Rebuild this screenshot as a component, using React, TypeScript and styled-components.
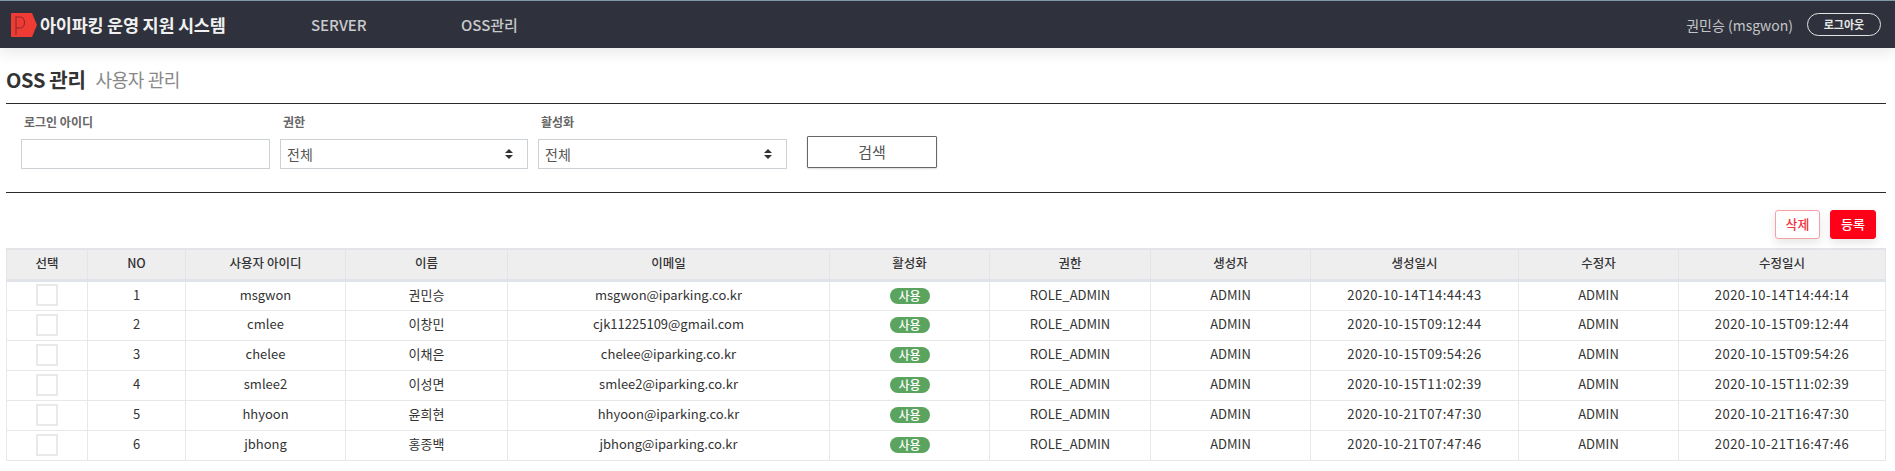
import React from "react";
import styled, { createGlobalStyle } from "styled-components";

const Global = createGlobalStyle`
  html, body { margin: 0; padding: 0; background: #fff; overflow: hidden; }
  body { font-family: "Noto Sans CJK KR", "Noto Sans", sans-serif; color: #333; }
  * { box-sizing: border-box; }
`;

const TopBar = styled.header`
  height: 48px;
  background: #2f323c;
  border-top: 1px solid #7d9aa8;
  display: flex;
  align-items: center;
  padding: 0 14px 0 11px;
  box-shadow: 0 5px 14px rgba(0, 0, 0, 0.09);
`;
const Brand = styled.div`
  display: flex;
  align-items: center;
  width: 300px;
  gap: 3px;
  font-size: 17.5px;
  font-weight: 700;
  color: #f0f0f0;
  letter-spacing: -0.25px;
  white-space: nowrap;
`;
const Nav = styled.a<{ $width: number }>`
  width: ${(p) => p.$width}px;
  font-size: 15px;
  font-weight: 500;
  color: #c9cacc;
`;
const Spacer = styled.div`
  flex: 1;
`;
const UserName = styled.span`
  font-size: 14px;
  color: #c4c5c8;
  margin-right: 14px;
`;
const Logout = styled.button`
  width: 74px;
  height: 23px;
  border: 1px solid #e4e4e4;
  border-radius: 12px;
  background: transparent;
  color: #e8e8e8;
  font-family: inherit;
  font-size: 11px;
  font-weight: 700;
  padding: 0;
  line-height: 1;
`;
const Page = styled.main`
  padding: 0 1px 0 6px;
`;
const TitleRow = styled.div`
  height: 56px;
  display: flex;
  align-items: center;
  gap: 10px;
  margin-right: 8px;
  border-bottom: 1px solid #2b2b2b;
  padding-top: 7px;
`;
const Title = styled.h1`
  margin: 0;
  font-size: 20px;
  font-weight: 700;
  color: #333;
  letter-spacing: -0.3px;
`;
const SubTitle = styled.h2`
  margin: 0;
  font-size: 18px;
  font-weight: 400;
  color: #888;
  letter-spacing: -0.4px;
`;
const Filter = styled.form`
  height: 89px;
  margin: 0 8px 0 0;
  padding: 8px 0 0 15px;
  display: flex;
  gap: 10px;
  border-bottom: 1px solid #2b2b2b;
`;
const Field = styled.div<{ $width: number }>`
  width: ${(p) => p.$width}px;
  display: flex;
  flex-direction: column;
`;
const Label = styled.label`
  height: 27px;
  padding-left: 3px;
  font-size: 12px;
  font-weight: 700;
  line-height: 20px;
  color: #666;
`;
const TextInput = styled.input`
  height: 30px;
  border: 1px solid #ccd1d6;
  background: #fff;
  outline: none;
  padding: 0 6px;
`;
const SelectWrap = styled.div`
  position: relative;
  height: 30px;
`;
const Select = styled.select`
  appearance: none;
  width: 100%;
  height: 100%;
  border: 1px solid #ccd1d6;
  border-radius: 0;
  background: #fff;
  padding: 0 6px;
  font-family: inherit;
  font-size: 14px;
  color: #555;
`;
const Caret = styled.svg`
  position: absolute;
  right: 15px;
  top: 10px;
  width: 8px;
  height: 10px;
`;
const SearchButton = styled.button`
  width: 130px;
  height: 32px;
  margin: 24px 0 0 10px;
  border: 1px solid #666;
  border-radius: 1px;
  background: #fff;
  color: #555;
  font-family: inherit;
  font-size: 15px;
  font-weight: 400;
  padding: 0 0 2px;
  box-shadow: 0 1px 2px rgba(0, 0, 0, 0.15);
`;
const Actions = styled.div`
  height: 55px;
  padding: 17px 18px 0 0;
  display: flex;
  justify-content: flex-end;
  gap: 10px;
`;
const ActionButton = styled.button<{ $solid?: boolean }>`
  height: 29px;
  width: ${(p) => (p.$solid ? 46 : 45)}px;
  border: 1px solid ${(p) => (p.$solid ? "#ff0019" : "#f8a0a8")};
  border-radius: 3px;
  background: ${(p) => (p.$solid ? "#ff0019" : "#fff")};
  color: ${(p) => (p.$solid ? "#fff" : "#f5323f")};
  font-family: inherit;
  font-size: 13px;
  font-weight: 500;
  padding: 0 0 2px;
  box-shadow: 0 4px 10px rgba(0, 0, 0, 0.1);
`;
const Table = styled.table`
  width: 1879px;
  table-layout: fixed;
  border-collapse: collapse;
  border-top: 2px solid #e2e4e8;
`;
const Head = styled.th`
  height: 31px;
  padding: 0 0 3px;
  background: #eeeeef;
  border-left: 1px solid #e2e4e8;
  border-right: 1px solid #e2e4e8;
  border-bottom: 3px solid #e0e3e7;
  font-size: 12.5px;
  font-weight: 500;
  color: #333;
`;
const Cell = styled.td<{ $date?: boolean }>`
  height: 30px;
  padding: 0 0 3px;
  border: 1px solid #e6e8ea;
  font-size: 13px;
  text-align: center;
  color: #333;
  letter-spacing: ${(p) => (p.$date ? "0.5px" : "0")};
`;
const Check = styled.input`
  appearance: none;
  display: block;
  width: 22px;
  height: 22px;
  margin: 2px auto 0;
  border: 2px solid #e9e9e9;
  background: #fff;
`;
const Badge = styled.span`
  display: inline-block;
  width: 40px;
  height: 16px;
  border-radius: 8px;
  background: #5aa460;
  color: #fff;
  font-size: 12px;
  font-weight: 500;
  line-height: 15px;
  vertical-align: middle;
`;

const widths = [81, 98, 160, 162, 322, 160, 161, 160, 208, 160, 207];
const heads = ["선택", "NO", "사용자 아이디", "이름", "이메일", "활성화", "권한", "생성자", "생성일시", "수정자", "수정일시"];
const rows = [
  ["msgwon", "권민승", "msgwon@iparking.co.kr", "2020-10-14T14:44:43", "2020-10-14T14:44:14"],
  ["cmlee", "이창민", "cjk11225109@gmail.com", "2020-10-15T09:12:44", "2020-10-15T09:12:44"],
  ["chelee", "이채은", "chelee@iparking.co.kr", "2020-10-15T09:54:26", "2020-10-15T09:54:26"],
  ["smlee2", "이성면", "smlee2@iparking.co.kr", "2020-10-15T11:02:39", "2020-10-15T11:02:39"],
  ["hhyoon", "윤희현", "hhyoon@iparking.co.kr", "2020-10-21T07:47:30", "2020-10-21T16:47:30"],
  ["jbhong", "홍종백", "jbhong@iparking.co.kr", "2020-10-21T07:47:46", "2020-10-21T16:47:46"],
];

const CaretIcon = () => (
  <Caret viewBox="0 0 8 10">
    <path d="M4 0 L8 4 H0 Z M0 6 H8 L4 10 Z" fill="#333" />
  </Caret>
);

const Choice = () => (
  <SelectWrap>
    <Select defaultValue="all">
      <option value="all">전체</option>
    </Select>
    <CaretIcon />
  </SelectWrap>
);

export default function App() {
  return (
    <>
      <Global />
      <TopBar>
        <Brand>
          <svg width="26" height="24" viewBox="0 0 26 24">
            <path d="M0 1 Q0 0 1 0 H21 L26 12 L21 24 H1 Q0 24 0 23 Z" fill="#ee3b33" />
            <path d="M5 22 V4 H9 C15 4 15 15 9 15 H5" fill="none" stroke="#8a2a2a" strokeWidth="1.1" />
          </svg>
          아이파킹 운영 지원 시스템
        </Brand>
        <Nav $width={150}>SERVER</Nav>
        <Nav $width={100}>OSS관리</Nav>
        <Spacer />
        <UserName>권민승 (msgwon)</UserName>
        <Logout>로그아웃</Logout>
      </TopBar>
      <Page>
        <TitleRow>
          <Title>OSS 관리</Title>
          <SubTitle>사용자 관리</SubTitle>
        </TitleRow>
        <Filter>
          <Field $width={249}>
            <Label>로그인 아이디</Label>
            <TextInput />
          </Field>
          <Field $width={248}>
            <Label>권한</Label>
            <Choice />
          </Field>
          <Field $width={249}>
            <Label>활성화</Label>
            <Choice />
          </Field>
          <SearchButton type="button">검색</SearchButton>
        </Filter>
        <Actions>
          <ActionButton type="button">삭제</ActionButton>
          <ActionButton type="button" $solid>등록</ActionButton>
        </Actions>
        <Table>
          <colgroup>
            {widths.map((w, i) => (
              <col key={i} width={w} />
            ))}
          </colgroup>
          <thead>
            <tr>
              {heads.map((h) => (
                <Head key={h}>{h}</Head>
              ))}
            </tr>
          </thead>
          <tbody>
            {rows.map((r, i) => (
              <tr key={r[0]}>
                <Cell>
                  <Check type="checkbox" />
                </Cell>
                <Cell>{i + 1}</Cell>
                <Cell>{r[0]}</Cell>
                <Cell>{r[1]}</Cell>
                <Cell>{r[2]}</Cell>
                <Cell>
                  <Badge>사용</Badge>
                </Cell>
                <Cell>ROLE_ADMIN</Cell>
                <Cell>ADMIN</Cell>
                <Cell $date>{r[3]}</Cell>
                <Cell>ADMIN</Cell>
                <Cell $date>{r[4]}</Cell>
              </tr>
            ))}
          </tbody>
        </Table>
      </Page>
    </>
  );
}
